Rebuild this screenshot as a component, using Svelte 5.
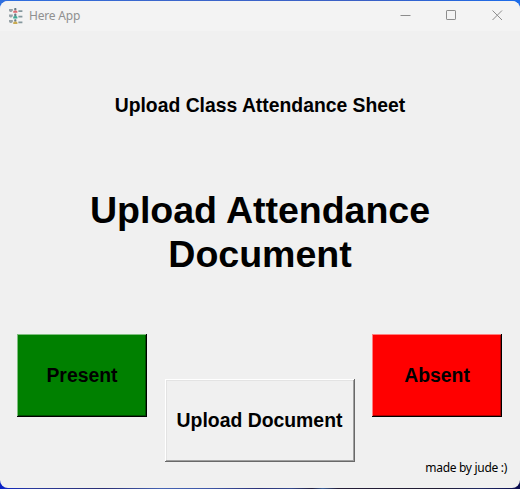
<script>
  const students = [
    { y: 0, color: '#dd6a70' },
    { y: 5.6, color: '#3fa995' },
    { y: 11.2, color: '#c9ab52' }
  ];
</script>

<div class="desktop">
  <main class="window">
    <header>
      <svg class="logo" width="16" height="17" viewBox="0 0 16 17" aria-hidden="true">
        {#each students as s}
          <g transform="translate(0 {s.y})">
            <path d="M1 0.9h3.8v1.8l-1.4 1.2H2.2L1 2.9Z" fill="#98a3a8" />
            <rect x="6.2" y="0" width="2.2" height="2.6" rx="0.8" fill="#687b85" />
            <path d="M5.2 4.8V3.6Q5.2 2.4 7.3 2.4T9.4 3.6V4.8Z" fill={s.color} />
            <path d="M10.4 3.1h4" fill="none" stroke="#84979d" stroke-width="1.7" />
          </g>
        {/each}
      </svg>
      <span class="title">Here App</span>
      <div class="controls">
        <svg width="11" height="11" viewBox="0 0 11 11"><path d="M0.5 5.5h10" /></svg>
        <svg width="11" height="11" viewBox="0 0 11 11"><rect x="0.5" y="0.5" width="9" height="9" rx="0.6" /></svg>
        <svg width="11" height="11" viewBox="0 0 11 11"><path d="M0.5 0.5l9.5 9.5M10 0.5L0.5 10" /></svg>
      </div>
    </header>
    <h2>Upload Class Attendance Sheet</h2>
    <h1>Upload Attendance<br />Document</h1>
    <div class="actions">
      <button class="present">Present</button>
      <button class="upload">Upload Document</button>
      <button class="absent">Absent</button>
    </div>
    <footer>made by jude :)</footer>
  </main>
</div>

<style>
  .desktop {
    box-sizing: border-box;
    width: 520px;
    height: 489px;
    padding: 1px 0;
    background:
      linear-gradient(90deg, #2f6fe0, #3a66cc 30%, #3a5fc4 70%, #1c6cea) top / 100% 12px no-repeat,
      linear-gradient(90deg, #0a22c8 0, #2a3a9c 6%, #2b2f74 20%, #4563b4 31%, #3e57a8 40%, #2c3278 50%, #34488c 56%, #231f40 60%, #3c5f98 62%, #241d38 65%, #211c34 85%, #202860 92%, #0a0d50) bottom / 100% 12px no-repeat;
  }
  .window {
    display: flex;
    flex-direction: column;
    height: 487px;
    border-radius: 8px;
    overflow: hidden;
    background: #f0f0f0;
    color: #000;
    font-family: "Liberation Sans", Arial, sans-serif;
  }
  header {
    box-sizing: border-box;
    display: flex;
    align-items: center;
    height: 30px;
    padding: 0 17px 0 8px;
    background: #f3f3f3;
    flex: none;
  }
  .title {
    margin-left: 5px;
    font: 12px/16px "Noto Sans", "Open Sans", sans-serif;
    letter-spacing: -0.2px;
    color: #909090;
  }
  .controls {
    display: flex;
    gap: 35px;
    margin: 0 0 1px auto;
  }
  .controls svg {
    fill: none;
    stroke: #8c8c8c;
    stroke-width: 1;
  }
  h2 {
    margin: 63px 0 0;
    font-size: 19.35px;
    line-height: 22px;
    text-align: center;
  }
  h1 {
    margin: 72px 0 0;
    font-size: 37.6px;
    line-height: 44px;
    letter-spacing: -0.05px;
    text-align: center;
  }
  .actions {
    display: flex;
    justify-content: space-between;
    margin-top: 58px;
    padding: 0 18px 0 17px;
  }
  button {
    box-sizing: border-box;
    width: 130px;
    height: 83px;
    padding: 0 0 2px;
    border: 0;
    border-radius: 0;
    color: #000;
    font: bold 19.4px/22px "Liberation Sans", Arial, sans-serif;
    white-space: nowrap;
  }
  .present {
    background: #008000;
    box-shadow: inset -1px -1px #000, inset 1px 1px #7fbf7f, inset -2px -2px #004d00;
  }
  .absent {
    background: #f00;
    box-shadow: inset -1px -1px #000, inset 1px 1px #ff7f7f, inset -2px -2px #b00000;
  }
  .upload {
    width: 190px;
    margin-top: 45px;
    background: #f0f0f0;
    box-shadow: inset -1px -1px #696969, inset 1px 1px #fff, inset -2px -2px #a0a0a0, inset 2px 2px #e3e3e3;
  }
  footer {
    margin: -2px 13px 0 0;
    font: 12px/16px "Noto Sans", "Open Sans", sans-serif;
    letter-spacing: -0.3px;
    text-align: right;
  }
</style>
